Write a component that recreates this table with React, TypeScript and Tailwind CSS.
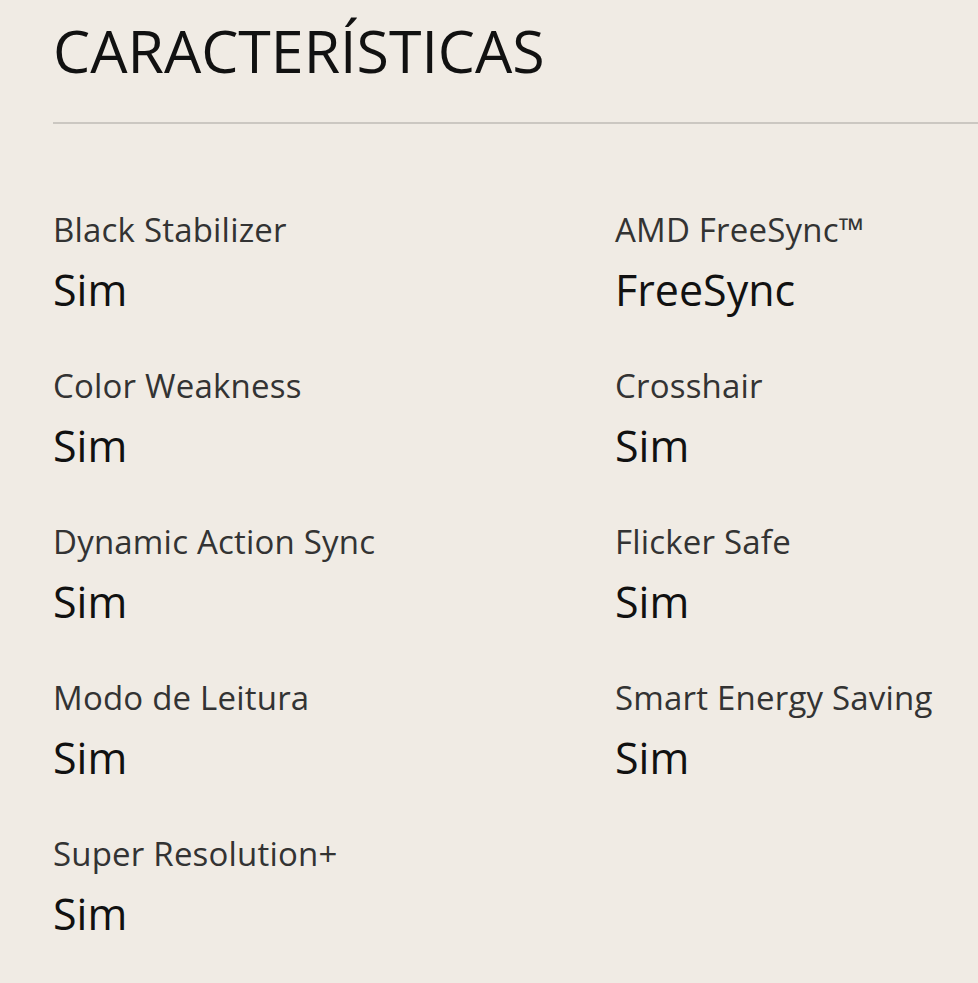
const specs = [
  { label: 'Black Stabilizer', value: 'Sim' },
  { label: 'AMD FreeSync™', value: 'FreeSync' },
  { label: 'Color Weakness', value: 'Sim' },
  { label: 'Crosshair', value: 'Sim' },
  { label: 'Dynamic Action Sync', value: 'Sim' },
  { label: 'Flicker Safe', value: 'Sim' },
  { label: 'Modo de Leitura', value: 'Sim' },
  { label: 'Smart Energy Saving', value: 'Sim' },
  { label: 'Super Resolution+', value: 'Sim' },
];

export default function App() {
  return (
    <div className="min-h-[983px] w-[978px] overflow-hidden bg-[#f0ebe4] pl-[53px] font-['Open_Sans',sans-serif]">
      <h2 className="pt-[14px] text-[59px] leading-[72px] font-normal text-[#111]">
        CARACTERÍSTICAS
      </h2>
      <div className="mt-[36px] h-[2px] bg-[#cbc7c1]" />
      <div className="mt-[86px] grid grid-cols-[562px_1fr] gap-y-[48px]">
        {specs.map((s) => (
          <div key={s.label} className="flex flex-col">
            <span className="text-[33px] leading-[40px] tracking-[0.2px] text-[#333]">{s.label}</span>
            <span className="mt-[12px] text-[43px] leading-[56px] text-[#111]">{s.value}</span>
          </div>
        ))}
      </div>
    </div>
  );
}
